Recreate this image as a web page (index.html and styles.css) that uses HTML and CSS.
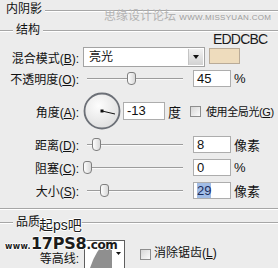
FILE: index.html
```html
<!DOCTYPE html>
<html lang="zh">
<head>
    <meta charset="UTF-8">
    <title>内阴影</title>
    <link rel="stylesheet" href="styles.css">
</head>
<body>
<div class="dialog">
    <div class="section-head"><span>内阴影</span></div>

    <div class="group">
        <div class="group-title"><span>结构</span></div>

        <div class="row row-blend">
            <label class="lbl">混合模式(<u>B</u>):</label>
            <div class="select"><span>亮光</span><i class="drop"></i></div>
            <div class="swatch"><span class="hex">EDDCBC</span></div>
        </div>

        <div class="row row-slide first">
            <label class="lbl">不透明度(<u>O</u>):</label>
            <div class="slider"><i class="thumb" style="left: 43px"></i></div>
            <div class="field">45</div>
            <span class="unit">%</span>
        </div>

        <div class="row row-angle">
            <label class="lbl">角度(<u>A</u>):</label>
            <svg class="dial" width="38" height="38" viewBox="0 0 38 38">
                <defs>
                    <radialGradient id="dialFill" cx="40%" cy="35%" r="70%">
                        <stop offset="0" stop-color="#fdfdfd"/>
                        <stop offset="1" stop-color="#dedede"/>
                    </radialGradient>
                </defs>
                <circle cx="19" cy="19" r="17.5" fill="url(#dialFill)" stroke="#6c7077" stroke-width="1.8"/>
                <line x1="19" y1="19" x2="32" y2="22" stroke="#111" stroke-width="1"/>
                <rect x="17.5" y="17.5" width="3" height="3" fill="#111"/>
            </svg>
            <div class="field field-angle">-13</div>
            <span class="unit">度</span>
            <i class="check"></i>
            <span class="check-text global">使用全局光(<u>G</u>)</span>
        </div>

        <div class="row row-slide">
            <label class="lbl">距离(<u>D</u>):</label>
            <div class="slider"><i class="thumb" style="left: 8px"></i></div>
            <div class="field">8</div>
            <span class="unit">像素</span>
        </div>

        <div class="row row-slide">
            <label class="lbl">阻塞(<u>C</u>):</label>
            <div class="slider"><i class="thumb" style="left: -1px"></i></div>
            <div class="field">0</div>
            <span class="unit">%</span>
        </div>

        <div class="row row-slide">
            <label class="lbl">大小(<u>S</u>):</label>
            <div class="slider"><i class="thumb" style="left: 16px"></i></div>
            <div class="field"><span class="selected">29</span></div>
            <span class="unit">像素</span>
        </div>
    </div>

    <div class="group-title quality"><span>品质</span></div>

    <div class="row row-contour">
        <label class="lbl">等高线:</label>
        <div class="contour">
            <svg width="39" height="34" viewBox="0 0 39 34">
                <path d="M3 34 Q9 10 22 0 L27 0 L27 34 Z" fill="#8f8f8f"/>
                <path d="M31 11 L36 11 L33.5 14 Z" fill="#111"/>
            </svg>
        </div>
        <i class="check check-aa"></i>
        <span class="check-text aa-text">消除锯齿(<u>L</u>)</span>
    </div>

    <!-- watermarks laid over the dialog -->
    <div class="mark-top">思缘设计论坛 <span>WWW.MISSYUAN.COM</span></div>
    <div class="mark-ps">起ps吧</div>
    <div class="mark-url"><span class="w">www.</span><span class="n">17PS8</span><span class="c">.com</span></div>
</div>
</body>
</html>
```

FILE: styles.css
```css
body {
    margin: 0;
    background-color: #ececec;
    font-family: "Liberation Sans", "Noto Sans CJK SC", sans-serif;
    font-size: 12px;
    color: #111;
}
.dialog {
    position: relative;
    width: 278px;
    height: 268px;
    overflow: hidden;
}
u {
    text-decoration: underline;
}
.section-head {
    display: flex;
    align-items: center;
    height: 18px;
}
.section-head span {
    margin: 0 3px 0 6px;
    line-height: 18px;
}
.section-head::after {
    content: "";
    flex: 1;
    margin-top: 3px;
    border-top: 1px solid #a6a6a6;
    box-shadow: 0 1px 0 #fff;
}
.group-title {
    display: flex;
    align-items: center;
    height: 12px;
    margin-top: 6px;
}
.group-title span {
    line-height: 12px;
    margin: 0 3px;
}
.group-title::before {
    content: "";
    width: 13px;
    border-top: 1px solid #a6a6a6;
    box-shadow: 0 1px 0 #fff;
}
.group-title::after {
    content: "";
    flex: 1;
    border-top: 1px solid #a6a6a6;
    box-shadow: 0 1px 0 #fff;
}
.group {
    padding-bottom: 9px;
    border-bottom: 1px solid #a6a6a6;
    box-shadow: 0 1px 0 #fff;
}
.row {
    display: flex;
    align-items: center;
}
.lbl {
    width: 79px;
    flex-shrink: 0;
    text-align: right;
    white-space: nowrap;
}
.row-blend {
    height: 20px;
    margin-top: 11px;
}
.select {
    position: relative;
    box-sizing: border-box;
    width: 122px;
    height: 20px;
    margin-left: 4px;
    padding-left: 5px;
    line-height: 18px;
    background-color: #fff;
    border: 1px solid #a3a3a3;
}
.drop {
    position: absolute;
    top: 1px;
    right: 1px;
    width: 14px;
    height: 16px;
    background: linear-gradient(#f2f2f2, #d2d2d2);
    border-left: 1px solid #c4c4c4;
}
.drop::after {
    content: "";
    position: absolute;
    top: 6px;
    left: 4px;
    border-left: 3px solid transparent;
    border-right: 3px solid transparent;
    border-top: 4px solid #111;
}
.swatch {
    position: relative;
    box-sizing: border-box;
    align-self: flex-start;
    width: 31px;
    height: 16px;
    margin: 1px 0 0 4px;
    background-color: #eedcbd;
    border: 1px solid #b9ab98;
}
.hex {
    position: absolute;
    left: 3px;
    top: -17px;
    font-size: 14px;
    letter-spacing: -0.8px;
    line-height: 14px;
    color: #1a1a1a;
}
.row-slide {
    height: 17px;
    margin-top: 6px;
}
.row-slide.first {
    margin-top: 3px;
}
.slider {
    position: relative;
    width: 102px;
    height: 17px;
    margin-left: 5px;
}
.slider::before {
    content: "";
    position: absolute;
    left: 3px;
    right: 3px;
    top: 8px;
    border-top: 1px solid #9c9c9c;
    border-bottom: 1px solid #fafafa;
}
.thumb {
    position: absolute;
    top: 2px;
    box-sizing: border-box;
    width: 9px;
    height: 13px;
    background: linear-gradient(90deg, #fdfdfd, #d9d9d9);
    border: 1px solid #7f7f7f;
    border-radius: 3px 3px 4px 4px;
}
.field {
    box-sizing: border-box;
    width: 38px;
    height: 17px;
    margin-left: 7px;
    padding-left: 3px;
    line-height: 15px;
    font-size: 13px;
    background-color: #fff;
    border: 1px solid #adadad;
}
.unit {
    margin-left: 3px;
    font-size: 13px;
}
.selected {
    background-color: #a2bde6;
    color: #1b2d5e;
}
.row-angle {
    height: 38px;
    margin-top: 5px;
}
.dial {
    margin-left: 4px;
}
.field-angle {
    width: 42px;
    height: 18px;
    margin-left: 2px;
    line-height: 16px;
}
.check {
    box-sizing: border-box;
    width: 11px;
    height: 11px;
    margin-left: 9px;
    background: linear-gradient(135deg, #d6d6d6, #fbfbfb);
    border: 1px solid #8d8d8d;
}
.check-text {
    margin-left: 5px;
    white-space: nowrap;
}
.global {
    font-size: 11px;
    letter-spacing: -0.4px;
}
.quality {
    margin-top: 7px;
}
.row-contour {
    align-items: flex-start;
    margin-top: 12px;
}
.row-contour .lbl {
    margin-top: 11px;
    line-height: 16px;
}
.contour {
    box-sizing: border-box;
    width: 41px;
    height: 36px;
    margin-left: 5px;
    background-color: #fff;
    border: 1px solid #5e5e5e;
}
.contour svg {
    display: block;
}
.check-aa {
    margin: 9px 0 0 15px;
}
.aa-text {
    margin: 6px 0 0 3px;
    line-height: 14px;
}
.mark-top {
    position: absolute;
    left: 104px;
    top: 6px;
    font-size: 12px;
    color: #b3b3b3;
    white-space: nowrap;
}
.mark-top span {
    font-size: 8px;
    letter-spacing: 0.3px;
    color: #9c9c9c;
}
.mark-ps {
    position: absolute;
    left: 39px;
    top: 214px;
    font-size: 14px;
    color: #1c1c1c;
    text-shadow: 1px 0 #fff, -1px 0 #fff, 0 1px #fff, 0 -1px #fff;
}
.mark-url {
    position: absolute;
    left: 5px;
    top: 234px;
    font-family: "DejaVu Sans", sans-serif;
    font-weight: bold;
    color: #1c1c1c;
    white-space: nowrap;
    text-shadow: 1px 0 #fff, -1px 0 #fff, 0 1px #fff, 0 -1px #fff;
}
.mark-url .w {
    font-size: 8px;
    letter-spacing: 0.3px;
}
.mark-url .n {
    font-size: 16px;
    letter-spacing: -0.2px;
}
.mark-url .c {
    font-size: 12px;
    letter-spacing: -0.4px;
}
```
